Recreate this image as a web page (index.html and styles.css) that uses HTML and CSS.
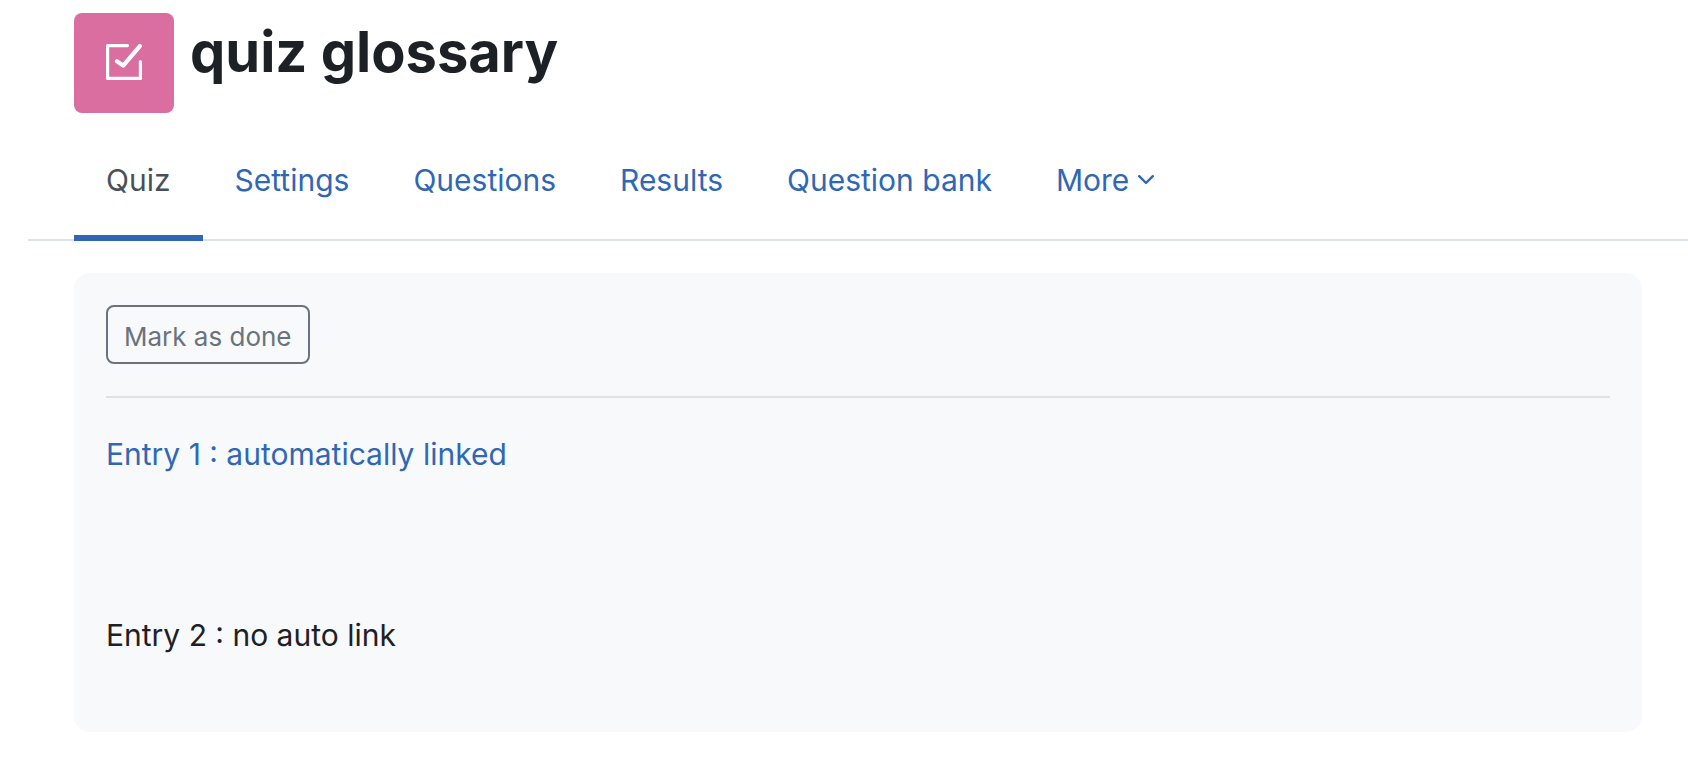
FILE: index.html
```html
<!DOCTYPE html>
<html lang="en">
<head>
<meta charset="utf-8">
<title>quiz glossary</title>
<link rel="stylesheet" href="styles.css">
</head>
<body>
<header class="page-header">
  <div class="activity-icon">
    <svg viewBox="0 0 36 38" width="36" height="38" fill="none" stroke="currentColor" stroke-linecap="round" stroke-linejoin="round" aria-hidden="true">
      <path stroke-width="3.2" d="M21.5 1.6H1.6V34.4H34.4V17.5"/>
      <path stroke-width="4.2" d="M11 17.2L17.2 21.6L33.8 2.2"/>
    </svg>
  </div>
  <h1 class="page-title">quiz glossary</h1>
</header>
<nav class="tabs" aria-label="Activity">
  <a class="tab tab-active" href="#" aria-current="page">Quiz</a>
  <a class="tab" href="#">Settings</a>
  <a class="tab" href="#">Questions</a>
  <a class="tab" href="#">Results</a>
  <a class="tab" href="#">Question bank</a>
  <button class="tab tab-more" type="button" aria-haspopup="true">More
    <svg viewBox="0 0 16 10" width="16" height="10" fill="none" stroke="currentColor" stroke-width="2.4" stroke-linecap="round" stroke-linejoin="round" aria-hidden="true"><path d="M1.2 1.2L8 8L14.8 1.2"/></svg>
  </button>
</nav>
<main class="panel">
  <button class="done-button" type="button">Mark as done</button>
  <hr class="divider">
  <p class="entry"><a class="entry-link" href="#">Entry 1 : automatically linked</a></p>
  <p class="entry">Entry 2 : no auto link</p>
</main>
</body>
</html>
```
FILE: styles.css
```css
* {
  box-sizing: border-box;
}

body {
  margin: 0;
  background: #fff;
  color: #1d2125;
  font: 30px/45px Inter, "Liberation Sans", sans-serif;
}

.page-header {
  display: flex;
  gap: 16px;
  padding: 13px 46px 8px 74px;
}

.activity-icon {
  display: flex;
  flex: none;
  align-items: center;
  justify-content: center;
  width: 100px;
  height: 100px;
  border-radius: 8px;
  background: #da6ea1;
  color: #fff;
}

.page-title {
  margin: 0;
  font-size: 56px;
  font-weight: 700;
  line-height: 78px;
}

.tabs {
  display: flex;
  margin-left: 28px;
  padding-left: 46px;
  box-shadow: inset 0 -2px #dee2e6;
}

.tab {
  display: flex;
  align-items: center;
  height: 120px;
  padding: 0 32px;
  border: 0;
  border-top: 4px solid transparent;
  border-bottom: 6px solid transparent;
  background: none;
  color: #3067b4;
  font: inherit;
  text-decoration: none;
}

.tab-active {
  border-bottom-color: #3067b4;
  color: #495057;
}

.tab-more {
  gap: 9px;
}

.panel {
  margin: 32px 46px 46px 74px;
  padding: 32px 32px 74px;
  border-radius: 16px;
  background: #f8f9fb;
}

.done-button {
  display: block;
  padding: 10px 16px 6px;
  border: 2px solid #6a737b;
  border-radius: 8px;
  background: none;
  color: #6a737b;
  font: inherit;
  font-size: 26px;
  line-height: 39px;
}

.divider {
  height: 2px;
  margin: 32px 0 34px;
  border: 0;
  background: #dee2e6;
}

.entry {
  margin: 0;
}

.entry + .entry {
  margin-top: 136px;
}

.entry-link {
  color: #3067b4;
  text-decoration: none;
}
```
